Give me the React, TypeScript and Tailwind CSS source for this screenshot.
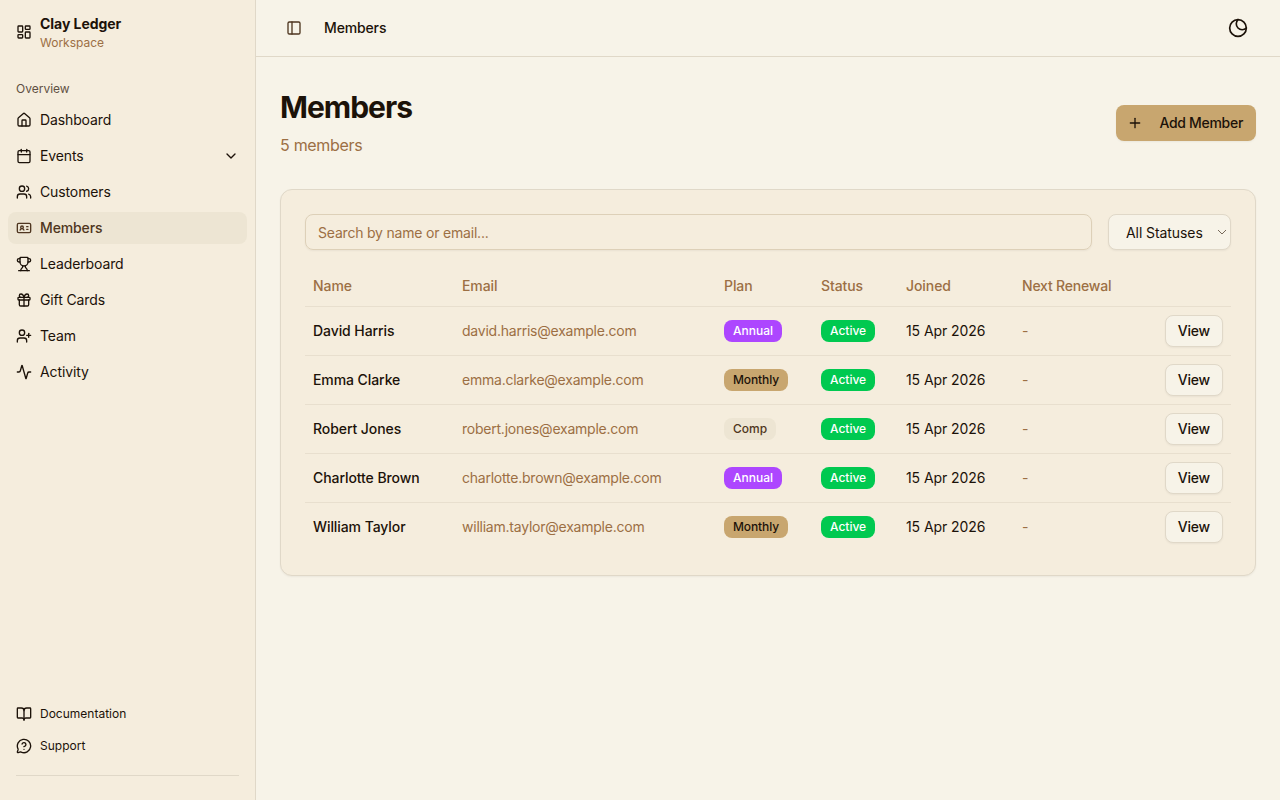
import {
  Activity,
  BookOpen,
  Calendar,
  ChevronDown,
  Eclipse,
  Gift,
  House,
  IdCard,
  LayoutDashboard,
  MessageCircleQuestion,
  PanelLeft,
  Plus,
  Trophy,
  UserPlus,
  Users,
} from 'lucide-react'

const navItems = [
  { label: 'Dashboard', icon: House },
  { label: 'Events', icon: Calendar, chevron: true },
  { label: 'Customers', icon: Users },
  { label: 'Members', icon: IdCard, active: true },
  { label: 'Leaderboard', icon: Trophy },
  { label: 'Gift Cards', icon: Gift },
  { label: 'Team', icon: UserPlus },
  { label: 'Activity', icon: Activity },
]

const planClass = {
  Annual: 'bg-[#ad46ff] text-white',
  Monthly: 'bg-[#c8a66f] text-[#1c1209] tracking-[-0.1px]',
  Comp: 'bg-[#ede5d3] text-[#4f3620]',
}

const members = [
  { name: 'David Harris', email: 'david.harris@example.com', plan: 'Annual' },
  { name: 'Emma Clarke', email: 'emma.clarke@example.com', plan: 'Monthly' },
  { name: 'Robert Jones', email: 'robert.jones@example.com', plan: 'Comp' },
  { name: 'Charlotte Brown', email: 'charlotte.brown@example.com', plan: 'Annual' },
  { name: 'William Taylor', email: 'william.taylor@example.com', plan: 'Monthly' },
] as const

const columns = [
  { label: 'Name', width: 'w-[149px] tracking-[-0.08px]' },
  { label: 'Email', width: 'w-[262px] tracking-[-0.08px]' },
  { label: 'Plan', width: 'w-[97px] tracking-[-0.08px]' },
  { label: 'Status', width: 'w-[85px] tracking-[-0.08px]' },
  { label: 'Joined', width: 'w-[116px] tracking-[-0.08px]' },
  { label: 'Next Renewal', width: 'w-[135px] tracking-[-0.2px]' },
  { label: '', width: '' },
]

function Sidebar() {
  return (
    <aside className="flex h-full w-64 shrink-0 flex-col border-r border-[#e0d8c8] bg-[#f5eddd] text-[#1c1209]">
      <div className="flex h-14 items-center gap-2 px-4 pt-2">
        <LayoutDashboard size={16} strokeWidth={2} aria-hidden="true" />
        <div>
          <p className="text-sm font-bold leading-5 tracking-[-0.05px]">Clay Ledger</p>
          <p className="mt-px text-xs leading-4 text-[#9c6f44]">Workspace</p>
        </div>
      </div>

      <div className="px-2 pt-[16px]">
        <p className="flex h-8 translate-y-px items-center px-2 text-xs font-normal text-[#5f5042]">Overview</p>
        <nav className="flex flex-col gap-1">
          {navItems.map((item) => {
            const Icon = item.icon

            return (
              <a
                key={item.label}
                className={`flex h-8 items-center gap-2 rounded-lg px-2 text-sm tracking-[-0.12px] ${
                  item.active ? 'bg-[#ede5d3] font-medium text-[#4f3620]' : ''
                }`}
              >
                <Icon size={16} aria-hidden="true" />
                <span className="flex-1">{item.label}</span>
                {item.chevron && <ChevronDown size={16} aria-hidden="true" />}
              </a>
            )
          })}
        </nav>
      </div>

      <div className="mt-auto px-2 pb-6">
        <div className="flex flex-col gap-1">
          <a className="flex h-7 items-center gap-2 px-2 text-xs">
            <BookOpen size={16} aria-hidden="true" />
            Documentation
          </a>
          <a className="flex h-7 items-center gap-2 px-2 text-xs">
            <MessageCircleQuestion size={16} aria-hidden="true" />
            Support
          </a>
        </div>
        <div className="mx-2 mt-[15px] border-t border-[#e0d8c8]" />
      </div>
    </aside>
  )
}

function MembersTable() {
  return (
    <table className="w-full table-fixed text-sm">
      <thead>
        <tr className="border-b border-[#e8dfce]">
          {columns.map((column) => (
            <th
              key={column.label}
              className={`h-10 px-2 text-left font-medium text-[#9c6f44] ${column.width}`}
            >
              {column.label}
            </th>
          ))}
        </tr>
      </thead>
      <tbody>
        {members.map((member) => (
          <tr key={member.email} className="border-b border-[#e8dfce] last:border-b-0">
            <td className="p-2 font-medium tracking-[-0.08px]">{member.name}</td>
            <td className="p-2 tracking-[-0.23px] text-[#9c6f44]">{member.email}</td>
            <td className="p-2">
              <span className={`inline-flex h-[22px] items-center rounded-lg px-[9px] text-xs font-medium ${planClass[member.plan]}`}>
                {member.plan}
              </span>
            </td>
            <td className="p-2">
              <span className="inline-flex h-[22px] items-center rounded-lg bg-[#00c950] px-[9px] text-xs font-medium text-white">
                Active
              </span>
            </td>
            <td className="p-2 tracking-[-0.08px]">15 Apr 2026</td>
            <td className="p-2 text-[#9c6f44]">-</td>
            <td className="p-2 text-right">
              <button className="h-8 rounded-lg border border-[#e0d8c8] bg-[#f7f3e8] px-3 font-medium tracking-[-0.2px] shadow-xs">
                View
              </button>
            </td>
          </tr>
        ))}
      </tbody>
    </table>
  )
}

export default function App() {
  return (
    <div className="flex h-screen overflow-hidden bg-[#f7f3e8] font-['Inter',sans-serif] text-[#1c1209]">
      <Sidebar />

      <main className="flex min-w-0 flex-1 flex-col">
        <header className="flex h-[57px] shrink-0 items-center border-b border-[#e0d8c8] px-6">
          <button className="flex size-7 items-center justify-center text-[#4f3620]">
            <PanelLeft size={16} aria-hidden="true" />
          </button>
          <span className="ml-4 text-sm font-medium tracking-[-0.14px]">Members</span>
          <button className="ml-auto flex size-9 items-center justify-center">
            <Eclipse size={20} aria-hidden="true" />
          </button>
        </header>

        <div className="px-6 pt-8">
          <div className="mb-8 flex items-center justify-between">
            <div>
              <h1 className="text-3xl font-bold tracking-[-1px]">Members</h1>
              <p className="mt-2 tracking-[-0.3px] text-[#9c6f44]">5 members</p>
            </div>
            <button className="flex h-9 items-center gap-4 rounded-lg bg-[#c8a66f] pr-[13px] pl-[11px] text-sm font-medium tracking-[-0.3px] shadow-xs">
              <Plus size={16} aria-hidden="true" />
              Add Member
            </button>
          </div>

          <section className="rounded-xl border border-[#e0d8c8] bg-[#f5eddd] p-6 shadow-xs">
            <div className="mb-4 flex gap-4">
              <input
                placeholder="Search by name or email..."
                className="h-9 flex-1 rounded-lg border border-[#ddd0b8] px-3 text-sm tracking-[-0.2px] shadow-xs outline-none placeholder:text-[#9c6f44]"
              />
              <div className="relative w-[123px]">
                <select className="h-9 w-full appearance-none rounded-lg border border-[#e0d8c8] bg-[#f7f3e8] pt-px pl-[17px] text-sm tracking-[-0.08px] shadow-xs outline-none">
                  <option>All Statuses</option>
                </select>
                <svg
                  viewBox="0 0 10 6"
                  className="pointer-events-none absolute top-[15px] right-[4px] h-[6px] w-[10px] text-[#77695a]"
                  fill="none"
                  stroke="currentColor"
                  strokeWidth="1"
                  aria-hidden="true"
                >
                  <path d="M1 1l4 4 4-4" />
                </svg>
              </div>
            </div>
            <MembersTable />
          </section>
        </div>
      </main>
    </div>
  )
}
